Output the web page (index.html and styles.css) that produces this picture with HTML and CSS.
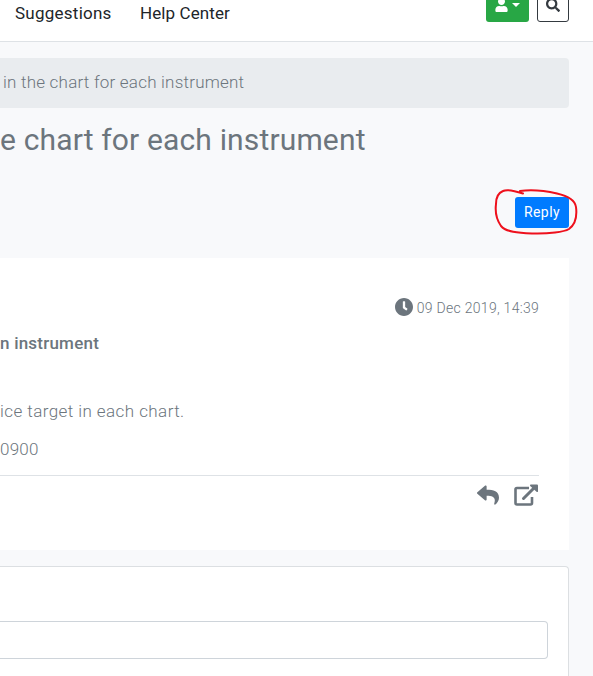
FILE: index.html
```html
<!DOCTYPE html>
<html lang="en">
<head>
    <meta charset="UTF-8">
    <meta name="viewport" content="width=device-width, initial-scale=1.0">
    <title>Forum topic</title>
    <link rel="stylesheet" href="styles.css">
</head>
<body>
    <header class="navbar">
        <nav class="nav-links">
            <a class="suggestions">Suggestions</a>
            <a class="help">Help Center</a>
        </nav>
        <div class="nav-buttons">
            <button class="btn btn-user" aria-label="Account">
                <svg class="icon-user" viewBox="0 0 448 512"><path d="M224 256c70.7 0 128-57.3 128-128S294.7 0 224 0 96 57.3 96 128s57.3 128 128 128zm89.6 32h-16.7c-22.2 10.2-46.9 16-72.9 16s-50.6-5.8-72.9-16h-16.7C60.2 288 0 348.2 0 422.4V464c0 26.5 21.5 48 48 48h352c26.5 0 48-21.5 48-48v-41.6c0-74.2-60.2-134.4-134.4-134.4z"/></svg>
                <span class="caret"></span>
            </button>
            <button class="btn btn-search" aria-label="Search">
                <svg class="icon-search" viewBox="0 0 512 512"><path d="M505 442.7L405.3 343c-4.5-4.5-10.6-7-17-7H372c27.6-35.3 44-79.7 44-128C416 93.1 322.9 0 208 0S0 93.1 0 208s93.1 208 208 208c48.3 0 92.7-16.4 128-44v16.3c0 6.4 2.5 12.5 7 17l99.7 99.7c9.4 9.4 24.6 9.4 33.9 0l28.3-28.3c9.4-9.4 9.4-24.6.1-34zM208 336c-70.7 0-128-57.2-128-128 0-70.7 57.2-128 128-128 70.7 0 128 57.2 128 128 0 70.7-57.2 128-128 128z"/></svg>
            </button>
        </div>
    </header>

    <main class="container">
        <div class="breadcrumb"><span>in the chart for each instrument</span></div>
        <h1><span>e chart for each instrument</span></h1>
        <div class="toolbar">
            <button class="btn btn-reply">Reply</button>
            <svg class="marker" viewBox="0 0 86 50"><path d="M30 6.5C21 3.500 13 2.500 10 4C5 6 3 11 3 17C2 25 3 32 8 39C13 45 25 46 39 46.500C56 47 71 45 76 42C83 37 84 28 83 20C82 13 75 9 64 6.500C51 3.500 37 2.500 27 4"/></svg>
        </div>

        <article class="post">
            <div class="post-date">
                <svg class="icon-clock" viewBox="8 8 496 496"><path d="M256,8C119,8,8,119,8,256S119,504,256,504,504,393,504,256,393,8,256,8Zm92.49,313h0l-20,25a16,16,0,0,1-22.49,2.500h0l-67-49.720a40,40,0,0,1-15-31.230V112a16,16,0,0,1,16-16h32a16,16,0,0,1,16,16V256l58,42.500A16,16,0,0,1,348.490,321Z"/></svg>
                <span>09 Dec 2019, 14:39</span>
            </div>
            <h2><span>n instrument</span></h2>
            <p class="line-text"><span>ice target in each chart.</span></p>
            <p class="line-number"><span>0900</span></p>
            <div class="post-actions">
                <svg class="icon-reply" viewBox="0 0 512 512"><path d="M8.309 189.836L184.313 37.851C199.719 24.546 224 35.347 224 56.015v80.053c160.629 1.839 288 34.032 288 186.258 0 61.441-39.581 122.309-83.333 154.132-13.653 9.931-33.111-2.533-28.077-18.631 45.344-145.012-21.507-183.510-176.590-185.742V360c0 20.700-24.300 31.453-39.687 18.164l-176.004-152c-11.071-9.562-11.086-26.753 0-36.328z"/></svg>
                <svg class="icon-link" viewBox="0 0 24 22"><path class="box" d="M15 4H3Q1.500 4 1.500 5.500V19Q1.500 20.500 3 20.500H16.500Q18 20.500 18 19V13"/><path class="shaft" d="M9.500 14.500L20 4"/><path class="head" d="M16.500 0.500H23Q24 0.500 24 1.500V7.500Q23.500 8.500 22.500 7.800L16.200 2Q15.600 1 16.500 0.500Z"/></svg>
            </div>
        </article>

        <section class="reply-form">
            <input type="text" aria-label="Subject">
        </section>
    </main>
</body>
</html>
```
FILE: styles.css
```css
* {
    box-sizing: border-box;
}
body {
    margin: 0;
    height: 676px;
    overflow: hidden;
    background-color: #f8f9fb;
    color: #6c757d;
    font-family: Roboto, "Liberation Sans", sans-serif;
    font-size: 17px;
    font-weight: 300;
}
span {
    white-space: nowrap;
}
.navbar {
    display: flex;
    justify-content: space-between;
    height: 42px;
    padding: 0 24px 0 15px;
    background-color: #fff;
    border-bottom: 1px solid #dee2e6;
}
.nav-links {
    display: flex;
    gap: 30px;
    color: #212529;
    font-weight: 400;
    line-height: 27px;
}
.suggestions {
    width: 95px;
    letter-spacing: 0.25px;
}
.help {
    letter-spacing: 0.1px;
}
.nav-buttons {
    display: flex;
    gap: 8px;
}
.btn {
    display: flex;
    align-items: center;
    justify-content: center;
    padding: 0;
    border: 0;
    border-radius: 3px;
    font-family: Roboto, sans-serif;
    font-size: 14px;
}
svg {
    fill: currentColor;
}
.btn-user {
    width: 43px;
    height: 31px;
    margin-top: -9px;
    gap: 4px;
    background-color: #28a745;
    color: #fff;
}
.btn-search {
    width: 32px;
    height: 31px;
    margin-top: -9px;
    background-color: #fff;
    border: 1px solid #343a40;
    color: #343a40;
}
.icon-user {
    width: 13px;
    height: 14px;
    margin-top: -4px;
}
.icon-search {
    width: 14px;
    height: 14px;
    margin-top: -4px;
}
.caret {
    margin-top: -3px;
    border-top: 4px solid #fff;
    border-left: 4px solid transparent;
    border-right: 4px solid transparent;
}
.container {
    padding: 16px 24px 0 0;
}
.breadcrumb {
    height: 50px;
    padding-left: 3px;
    border-radius: 0 4px 4px 0;
    background-color: #e9ecef;
    line-height: 49px;
    letter-spacing: 0.22px;
}
h1 {
    height: 64px;
    margin: 0;
    font-size: 30px;
    font-weight: 400;
    line-height: 64px;
    letter-spacing: 0.15px;
}
.toolbar {
    position: relative;
    display: flex;
    justify-content: flex-end;
    height: 86px;
    padding-top: 25px;
}
.btn-reply {
    width: 54px;
    height: 31px;
    padding-bottom: 2px;
    background-color: #007bff;
    color: #fff;
    letter-spacing: 0.4px;
}
.marker {
    position: absolute;
    top: 15px;
    right: -10px;
    width: 86px;
    height: 50px;
    fill: none;
    stroke: #ee101c;
    stroke-width: 2;
    stroke-linecap: round;
}
.post {
    height: 292px;
    padding: 38px 30px 0 0;
    background-color: #fff;
}
.post-date {
    display: flex;
    align-items: center;
    justify-content: flex-end;
    gap: 4px;
    height: 22px;
    font-size: 14px;
    letter-spacing: 0.28px;
}
.post-date span {
    padding-top: 2px;
}
.icon-clock {
    width: 18px;
    height: 18px;
}
h2 {
    height: 50px;
    margin: 0;
    font-size: 17px;
    font-weight: 500;
    line-height: 51px;
    letter-spacing: 0.22px;
}
p {
    margin: 0;
    line-height: 39px;
}
.line-text {
    height: 38px;
    margin-top: 24px;
    letter-spacing: 0.43px;
}
.line-number {
    height: 45px;
    letter-spacing: 0.2px;
}
.post-actions {
    display: flex;
    justify-content: flex-end;
    gap: 15px;
    padding: 8px 1px 0 0;
    border-top: 1px solid #dee2e6;
}
.icon-reply {
    width: 22px;
    height: 22px;
}
.icon-link {
    width: 24px;
    height: 22px;
}
.icon-link .box {
    fill: none;
    stroke: currentColor;
    stroke-width: 2.6;
}
.icon-link .shaft {
    stroke: currentColor;
    stroke-width: 3;
    stroke-linecap: round;
}
.reply-form {
    height: 130px;
    margin-top: 16px;
    padding: 54px 20px 0 0;
    background-color: #fff;
    border: 1px solid #dcdfe2;
    border-left: 0;
    border-bottom: 0;
    border-radius: 0 4px 0 0;
}
.reply-form input {
    display: block;
    width: 100%;
    height: 38px;
    border: 1px solid #ced4da;
    border-left: 0;
    border-radius: 0 4px 4px 0;
    background-color: #fff;
}
```
